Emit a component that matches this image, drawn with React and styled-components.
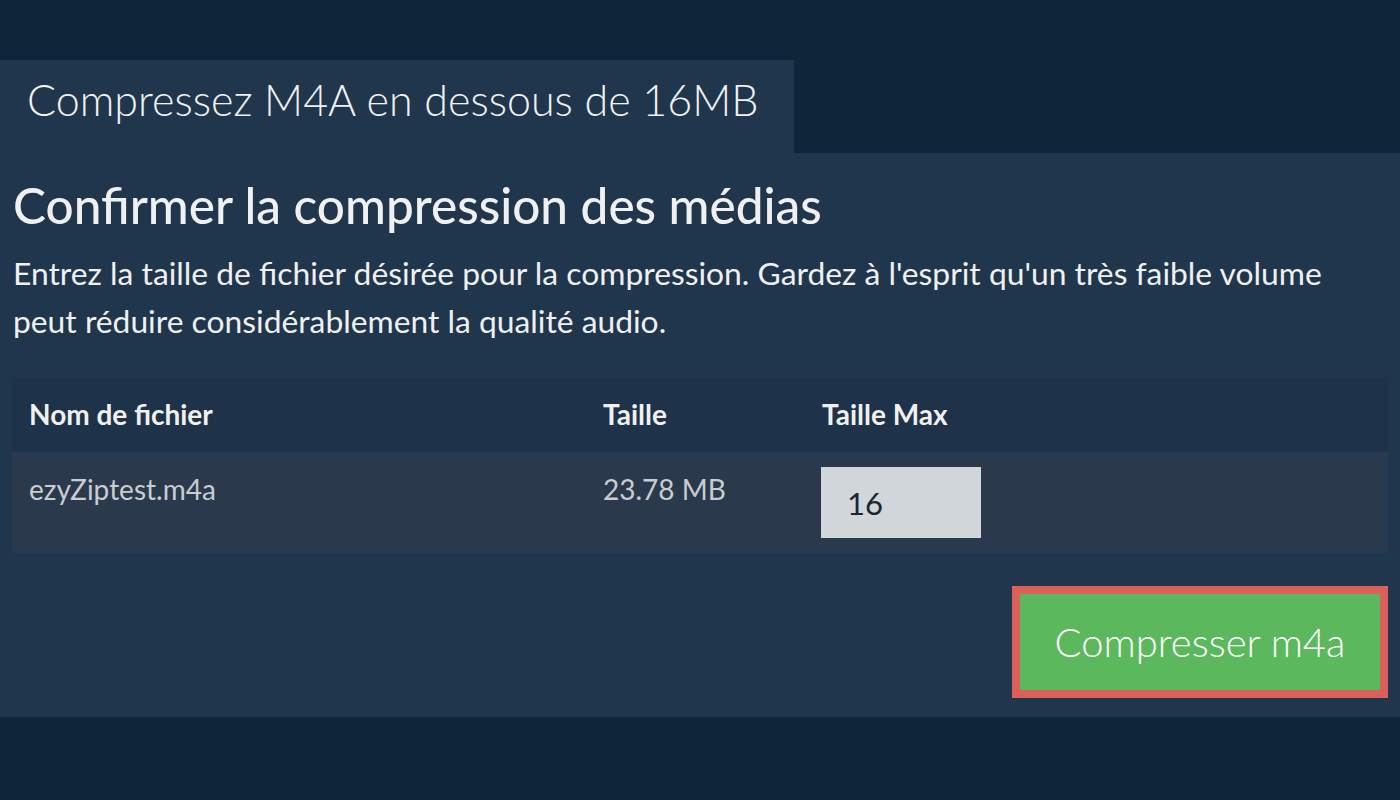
import styled, { createGlobalStyle } from "styled-components";

const GlobalStyle = createGlobalStyle`
  html, body {
    margin: 0;
    padding: 0;
    background: #0f253a;
    font-family: Lato, "Open Sans", sans-serif;
  }
`;

const Page = styled.main`
  padding-top: 60px;
  min-height: 800px;
  box-sizing: border-box;
`;

const Tab = styled.div`
  display: inline-block;
  background: #20364d;
  color: #f1f1f1;
  font-size: 43px;
  font-weight: 300;
  padding: 16px 36px 30px 27px;
  line-height: 47px;
`;

const Panel = styled.section`
  background: #20364d;
  padding: 22px 12px 19px;
  color: #f0f0f0;
`;

const Title = styled.h2`
  margin: 0;
  font-size: 49.5px;
  font-weight: 500;
  line-height: 60px;
  padding-left: 1px;
`;

const Intro = styled.p`
  margin: 14px 0 33px;
  max-width: 1340px;
  font-size: 31.8px;
  line-height: 48px;
  padding-left: 1px;
`;

const Table = styled.table`
  width: 100%;
  border-collapse: collapse;
  table-layout: fixed;
`;

const HeadCell = styled.th`
  box-sizing: border-box;
  background: #1e3349;
  text-align: left;
  font-size: 28px;
  font-weight: 700;
  padding: 19px 17px 21px;
  line-height: 34px;
  width: ${(p) => p.$w || "auto"};
`;

const Row = styled.tr`
  background: #2a3a4c;
`;

const Cell = styled.td`
  vertical-align: top;
  padding: 20px 17px 15px 17px;
  font-size: 28px;
  line-height: 34px;
  color: #c9ccd0;
`;

const InputCell = styled(Cell)`
  padding: 15px 16px;
`;

const SizeInput = styled.input`
  display: block;
  width: 160px;
  height: 71px;
  box-sizing: border-box;
  border: none;
  background: #d1d6db;
  color: #1b2633;
  font-family: Lato, sans-serif;
  font-size: 31px;
  padding: 0 26px;
  outline: none;
`;

const Actions = styled.div`
  display: flex;
  justify-content: flex-end;
  margin-top: 33px;
`;

const CompressButton = styled.button`
  background: #5cb85c;
  border: 8px solid #dc5f5a;
  color: #ffffff;
  font-family: Lato, sans-serif;
  font-size: 40px;
  font-weight: 300;
  width: 376px;
  height: 112px;
  padding: 0;
  cursor: pointer;
`;

export default function App() {
  return (
    <>
      <GlobalStyle />
      <Page>
        <Tab>Compressez M4A en dessous de 16MB</Tab>
        <Panel>
          <Title>Confirmer la compression des médias</Title>
          <Intro>
            Entrez la taille de fichier désirée pour la compression. Gardez à
            l'esprit qu'un très faible volume peut réduire considérablement la
            qualité audio.
          </Intro>
          <Table>
            <thead>
              <tr>
                <HeadCell $w="574px">Nom de fichier</HeadCell>
                <HeadCell $w="219px">Taille</HeadCell>
                <HeadCell>Taille Max</HeadCell>
              </tr>
            </thead>
            <tbody>
              <Row>
                <Cell>ezyZiptest.m4a</Cell>
                <Cell>23.78 MB</Cell>
                <InputCell>
                  <SizeInput type="text" defaultValue="16" />
                </InputCell>
              </Row>
            </tbody>
          </Table>
          <Actions>
            <CompressButton>Compresser m4a</CompressButton>
          </Actions>
        </Panel>
      </Page>
    </>
  );
}
